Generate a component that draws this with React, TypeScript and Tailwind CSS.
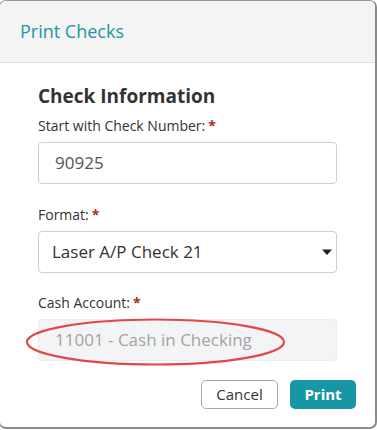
function Label({ text }: { text: string }) {
  return (
    <div className="text-[14px] leading-[20px] text-[#333]">
      {text}
      <span className="ml-[3px] font-bold text-[#b0282b]">*</span>
    </div>
  );
}

export default function App() {
  return (
    <div className="w-[377px] h-[430px] overflow-hidden bg-white font-['Open_Sans',sans-serif]">
      <div className="ml-[-1px] w-[378px] h-[429px] rounded-[7px] border border-[#9a9a9a] border-r-2 border-b-2 border-r-[#8a8a8a] border-b-[#8a8a8a] bg-white flex flex-col overflow-hidden">
        {/* Header */}
        <div className="h-[62px] shrink-0 bg-[#f4f4f4] border-b border-[#e0e0e0] pl-[20px] flex items-center">
          <h1 className="text-[18px] text-[#1b97a7] leading-none pb-[1px]">Print Checks</h1>
        </div>

        {/* Body */}
        <div className="flex-1 px-[38px] pt-[20px]">
          <h2 className="text-[19px] leading-[26px] font-bold text-[#333]">Check Information</h2>

          <div className="mt-[7px]">
            <Label text="Start with Check Number:" />
            <div className="mt-[6px] h-[42px] rounded-[4px] border border-[#cfcfcf] flex items-center pl-[16px] text-[17px] text-[#555]">
              90925
            </div>
          </div>

          <div className="mt-[21px]">
            <Label text="Format:" />
            <div className="mt-[6px] h-[42px] rounded-[4px] border border-[#cfcfcf] flex items-center justify-between pl-[13px] pr-[2px] text-[17px] text-[#333]">
              <span>Laser A/P Check 21</span>
              <svg width="12" height="8" viewBox="0 0 12 8" className="mr-[1px]">
                <path d="M1 1.5h10L6 7z" fill="#222" />
              </svg>
            </div>
          </div>

          <div className="mt-[20px]">
            <Label text="Cash Account:" />
            <div className="relative mt-[6px] h-[42px] rounded-[4px] border border-[#ececec] bg-[#f3f4f6] flex items-center pl-[16px] text-[17px] text-[#a3a3a3]">
              11001 - Cash in Checking
              <svg
                className="absolute left-[-13px] top-[-2px] pointer-events-none"
                width="262"
                height="50"
                viewBox="0 0 262 50"
              >
                <ellipse cx="129.5" cy="24" rx="128.5" ry="22.5" fill="none" stroke="#e2474a" strokeWidth="2.2" />
              </svg>
            </div>
          </div>
        </div>

        {/* Footer */}
        <div className="flex justify-end gap-[12px] pr-[19px] pb-[18px]">
          <button className="h-[29px] w-[77px] rounded-[5px] border border-[#a8a8a8] bg-white text-[15px] text-[#333]">
            Cancel
          </button>
          <button className="h-[29px] w-[66px] rounded-[5px] bg-[#1797a6] text-[15px] font-bold text-white">
            Print
          </button>
        </div>
      </div>
    </div>
  );
}
